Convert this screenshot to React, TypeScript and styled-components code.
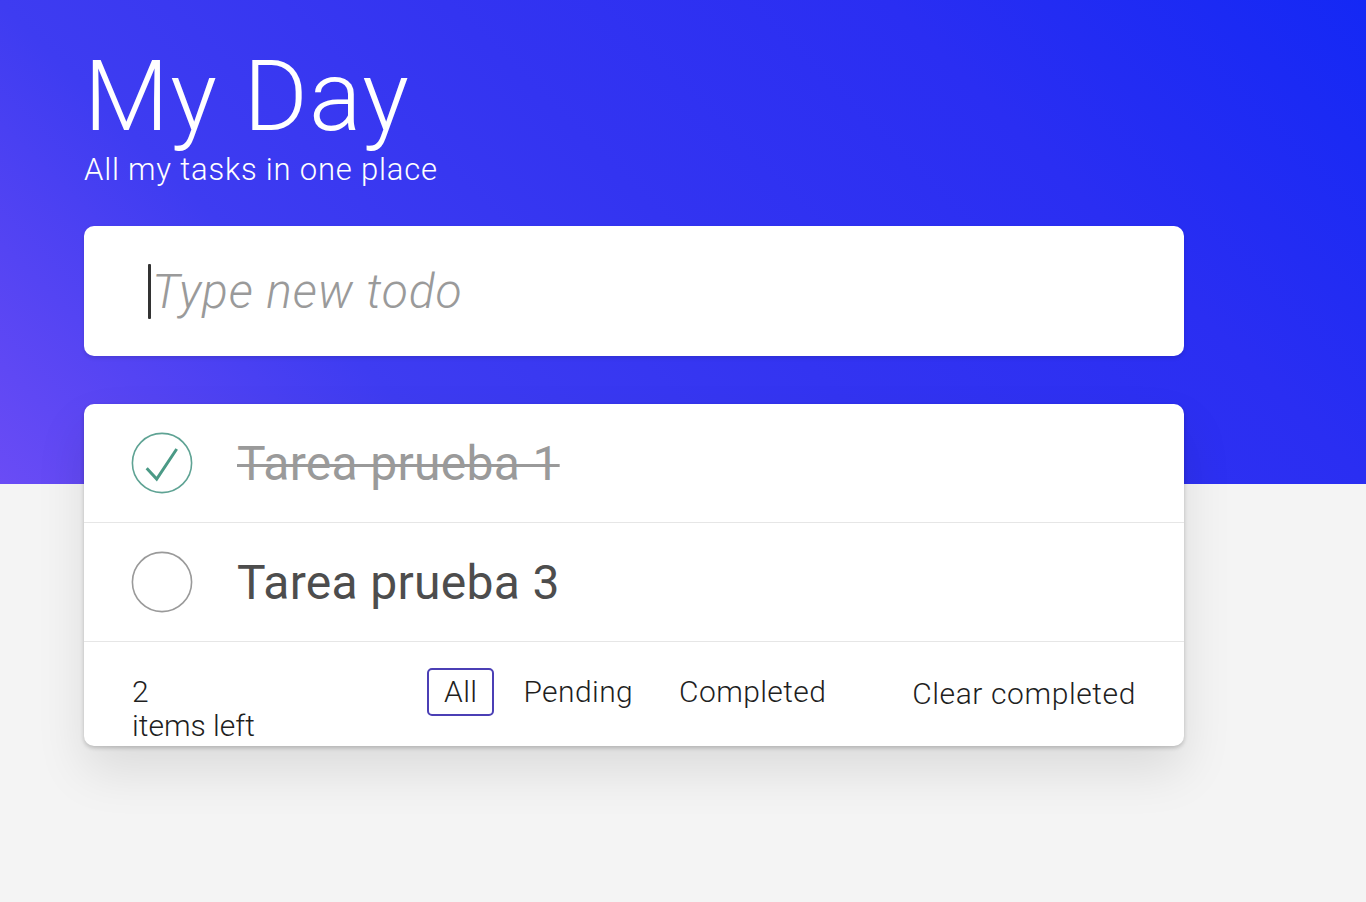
import React, { useState } from 'react'
import styled, { createGlobalStyle } from 'styled-components'

const GlobalStyle = createGlobalStyle`
  html, body {
    margin: 0;
    padding: 0;
  }
  body {
    background: #f4f4f4;
    font-family: Roboto, "Liberation Sans", Arial, sans-serif;
    -webkit-font-smoothing: antialiased;
  }
`

const Page = styled.div`
  min-height: 902px;
  box-sizing: border-box;
  padding: 48px 0 0 84px;
  background:
    linear-gradient(45deg, #6a4cf5 0%, #3e3cf1 26%, #3334f1 50%, #2a2ef2 74%, #1428f5 100%) top left / 100% 484px no-repeat,
    #f4f4f4;
`

const Main = styled.main`
  width: 1100px;
`

const Title = styled.h1`
  margin: 0;
  color: #fff;
  font-size: 98px;
  font-weight: 300;
  line-height: 1;
  letter-spacing: 1.4px;
`

const Subtitle = styled.p`
  margin: 8px 0 0;
  color: #fff;
  font-size: 31px;
  font-weight: 300;
  line-height: 1;
  letter-spacing: 0.8px;
`

const InputBox = styled.label`
  display: flex;
  align-items: center;
  height: 130px;
  margin-top: 41px;
  padding-left: 64px;
  box-sizing: border-box;
  background: #fff;
  border-radius: 10px;
  box-shadow: 0 2px 4px rgba(0, 0, 0, 0.12);
`

const Caret = styled.span`
  flex: none;
  width: 3px;
  height: 55px;
  background: #333;
  border-radius: 1px;
`

const NewTodo = styled.input`
  flex: 1;
  min-width: 0;
  padding: 0 0 0 1px;
  border: 0;
  outline: none;
  background: transparent;
  caret-color: transparent;
  color: #4d4d4d;
  font-family: Roboto, "Liberation Sans", Arial, sans-serif;
  font-size: 48px;
  font-style: italic;
  font-weight: 300;
  letter-spacing: 0.9px;
  &::placeholder {
    color: #9a9a9a;
    font-style: italic;
  }
`

const Card = styled.section`
  margin-top: 48px;
  background: #fff;
  border-radius: 10px;
  box-shadow: 0 2px 4px rgba(0, 0, 0, 0.2), 0 25px 50px rgba(0, 0, 0, 0.1);
  overflow: hidden;
`

const Row = styled.div`
  display: flex;
  align-items: center;
  gap: 44px;
  height: 119px;
  box-sizing: border-box;
  padding-left: 47px;
  border-bottom: 1px solid #e6e6e6;
`

const Toggle = styled.button`
  flex: none;
  display: flex;
  width: 62px;
  height: 62px;
  padding: 0;
  border: 0;
  background: none;
  cursor: pointer;
`

const TodoText = styled.span<{ $done: boolean }>`
  font-size: 48px;
  font-weight: 400;
  letter-spacing: 0.3px;
  color: ${({ $done }) => ($done ? '#9a9a9a' : '#4d4d4d')};
  text-decoration: ${({ $done }) => ($done ? 'line-through' : 'none')};
  text-decoration-thickness: 3px;
`

const Footer = styled.footer`
  display: flex;
  align-items: flex-start;
  height: 104px;
  box-sizing: border-box;
  padding: 26px 46px 0 48px;
  color: #1f1f1f;
  font-size: 30px;
  font-weight: 300;
`

const Count = styled.div`
  display: flex;
  flex-direction: column;
  width: 295px;
  margin-top: 7px;
  line-height: 34px;
`

const Filters = styled.nav`
  display: flex;
  gap: 12px;
`

const FilterButton = styled.button<{ $active?: boolean }>`
  height: 48px;
  padding: 0 15px;
  border: 2px solid ${({ $active }) => ($active ? '#4b3fb5' : 'transparent')};
  border-radius: 5px;
  background: none;
  color: #1f1f1f;
  font-family: inherit;
  font-size: 30px;
  font-weight: 300;
  line-height: 44px;
  letter-spacing: 0.4px;
  cursor: pointer;
`

const ClearButton = styled(FilterButton)`
  margin-left: auto;
  margin-top: 2px;
  padding: 0;
  letter-spacing: 0.6px;
`

type Todo = { text: string; completed: boolean }

const CheckIcon = ({ checked }: { checked: boolean }) => (
  <svg width="62" height="62" viewBox="0 0 62 62" fill="none">
    <circle cx="31" cy="31" r="29.6" stroke={checked ? '#5fa394' : '#9a9a9a'} strokeWidth="1.6" />
    {checked && (
      <polyline points="15.7,36.3 25.7,47 45.7,17" stroke="#4b9a86" strokeWidth="3" strokeLinejoin="miter" />
    )}
  </svg>
)

const App = () => {
  const [todos, setTodos] = useState<Todo[]>([
    { text: 'Tarea prueba 1', completed: true },
    { text: 'Tarea prueba 3', completed: false }
  ])
  const left = todos.filter((t) => !t.completed).length + 1

  const toggle = (i: number) => {
    setTodos(todos.map((t, idx) => (idx === i ? { ...t, completed: !t.completed } : t)))
  }

  return (
    <Page>
      <GlobalStyle />
      <Main>
        <Title>My Day</Title>
        <Subtitle>All my tasks in one place</Subtitle>
        <InputBox>
          <Caret />
          <NewTodo placeholder="Type new todo" />
        </InputBox>
        <Card>
          {todos.map((todo, i) => (
            <Row key={todo.text}>
              <Toggle onClick={() => toggle(i)}>
                <CheckIcon checked={todo.completed} />
              </Toggle>
              <TodoText $done={todo.completed}>{todo.text}</TodoText>
            </Row>
          ))}
          <Footer>
            <Count>
              <span>{left}</span>
              <span>items left</span>
            </Count>
            <Filters>
              <FilterButton $active>All</FilterButton>
              <FilterButton>Pending</FilterButton>
              <FilterButton>Completed</FilterButton>
            </Filters>
            <ClearButton>Clear completed</ClearButton>
          </Footer>
        </Card>
      </Main>
    </Page>
  )
}

export default App
